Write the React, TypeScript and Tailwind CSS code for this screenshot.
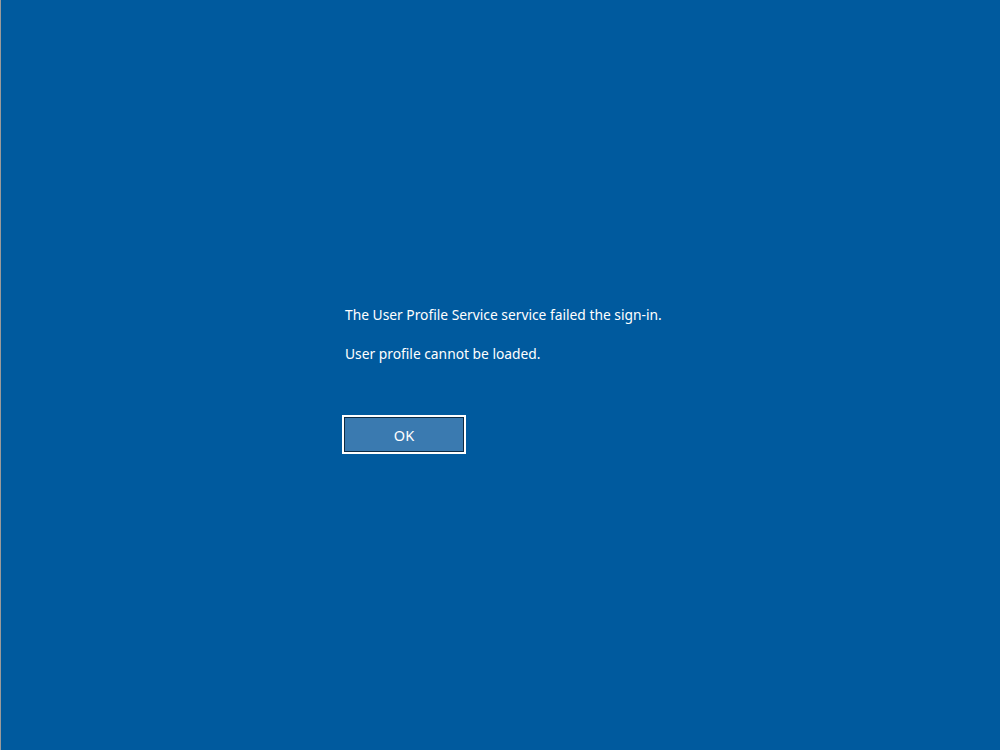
import React from "react";

export default function App() {
  return (
    <div
      className="w-[1000px] h-[750px] bg-[#005a9e] border-l border-l-[#9a9a9a] flex flex-col"
      style={{ fontFamily: '"Noto Sans", "Open Sans", sans-serif' }}
    >
      <div className="pt-[305px] pl-[344px] text-white text-[13.8px] leading-[20px]">
        <p>The User Profile Service service failed the sign-in.</p>
        <p className="mt-[19px]">User profile cannot be loaded.</p>
        <button className="mt-[51px] -ml-[3px] w-[124px] h-[39px] border-2 border-white outline-none">
          <div className="w-full h-full border border-[#0d2a44] bg-[#3a7ab0] flex items-center justify-center text-[14.5px] text-white">
            OK
          </div>
        </button>
      </div>
    </div>
  );
}
